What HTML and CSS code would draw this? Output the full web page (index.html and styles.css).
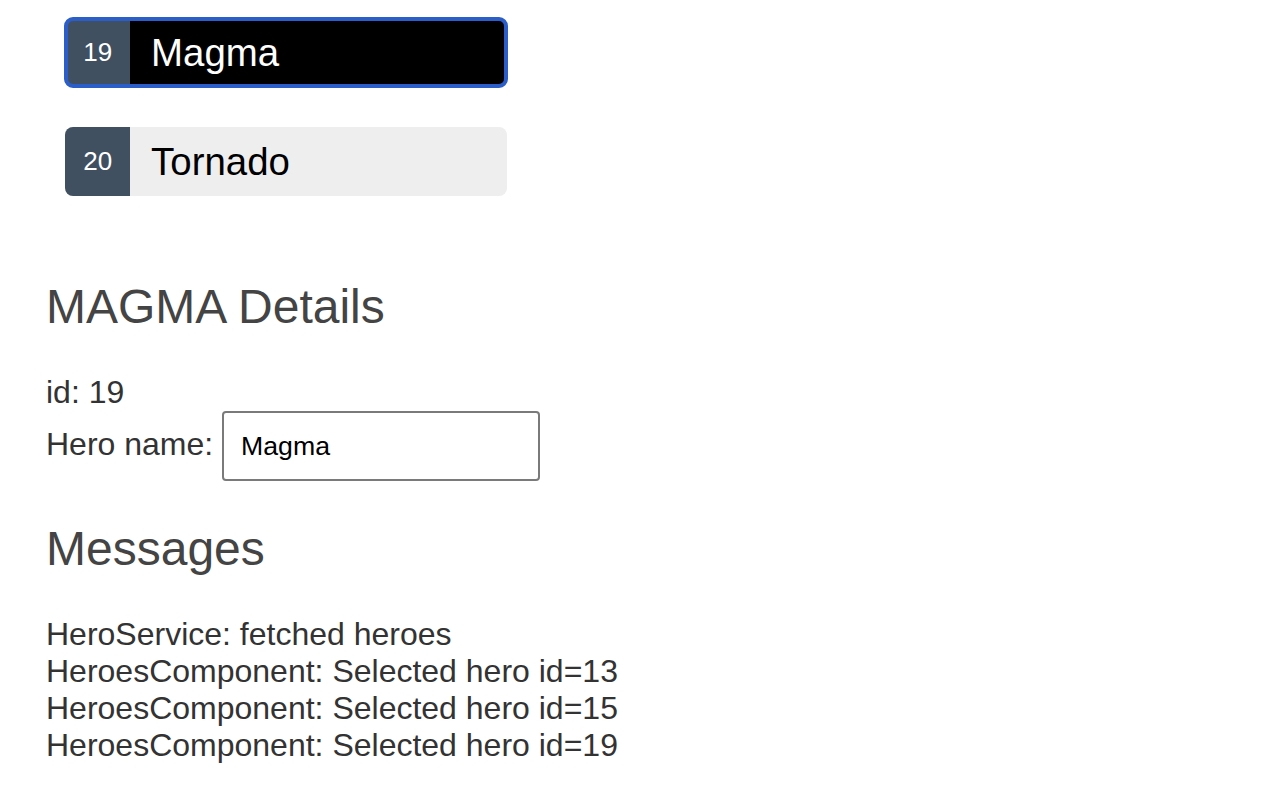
FILE: index.html
```html
<!DOCTYPE html>
<html>
<head>
<meta charset="utf-8">
<link rel="stylesheet" href="styles.css">
</head>
<body>
<div class="app">
  <ul class="heroes">
    <li><button type="button" class="hero selected"><span class="badge">19</span><span class="name">Magma</span></button></li>
    <li><button type="button" class="hero"><span class="badge">20</span><span class="name">Tornado</span></button></li>
  </ul>

  <div class="details">
    <h2 class="title">MAGMA Details</h2>
    <div class="row"><span>id: </span>19</div>
    <div class="row">
      <label for="hero-name">Hero name: </label><input id="hero-name" class="name-input" type="text" value="Magma">
    </div>
  </div>

  <div class="messages">
    <h2 class="title">Messages</h2>
    <div class="msg">HeroService: fetched heroes</div>
    <div class="msg">HeroesComponent: Selected hero id=13</div>
    <div class="msg">HeroesComponent: Selected hero id=15</div>
    <div class="msg">HeroesComponent: Selected hero id=19</div>
  </div>
</div>
</body>
</html>
```

FILE: styles.css
```css
* {
  font-family: "Liberation Sans", Arial, Helvetica, sans-serif;
}

html, body {
  margin: 0;
  padding: 0;
  background: #fff;
}

body {
  color: #333;
  font-size: 32px;
}

.app {
  padding: 0 0 0 46px;
}

.heroes {
  list-style: none;
  margin: 0;
  padding: 0;
  width: 480px;
}

.heroes li {
  display: flex;
}

.hero {
  flex: 1;
  display: flex;
  align-items: stretch;
  height: 69px;
  margin: 18px 19px 22px 19px;
  padding: 0;
  border: none;
  border-radius: 8px;
  background-color: #eee;
  color: #000;
  font-size: 38.4px;
  text-align: left;
  cursor: pointer;
}

.hero.selected {
  background-color: #000;
  color: #fff;
  outline: 4px solid #2b5ec8;
  outline-offset: -3px;
}

.badge {
  display: inline-block;
  font-size: 26px;
  line-height: 26px;
  color: #fff;
  background-color: #405061;
  padding: 20.8px 18.2px 0 18.2px;
  margin-right: 20.8px;
  border-radius: 8px 0 0 8px;
}

.name {
  align-self: center;
}

.title {
  color: #444;
  font-size: 48px;
  font-weight: normal;
  margin: 0 0 40px 0;
}

.details {
  margin-top: 61px;
}

.row {
  font-size: 32px;
  color: #333;
}

.name-input {
  box-sizing: border-box;
  width: 318px;
  height: 70px;
  padding: 0 17px;
  border: 2px solid #7a7a7a;
  border-radius: 4px;
  font-size: 26.67px;
  color: #000;
  background: #fff;
  vertical-align: baseline;
}

.messages {
  margin-top: 40px;
}

.msg {
  font-size: 32px;
  line-height: 37px;
  color: #333;
}
```
